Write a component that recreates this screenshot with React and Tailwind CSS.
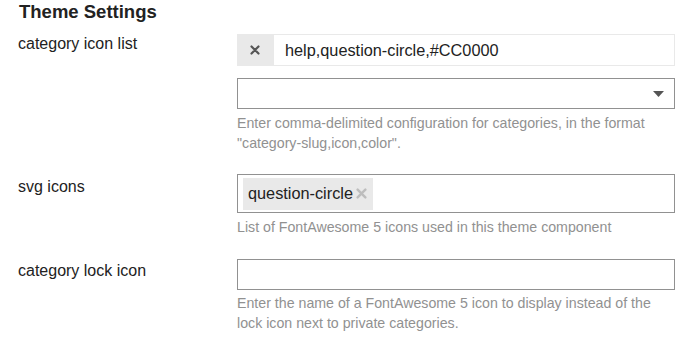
export default function App() {
  const font = { fontFamily: '"Liberation Sans", Arial, Helvetica, sans-serif' };
  return (
    <div className="w-[690px] h-[344px] bg-white text-[#222222] overflow-hidden" style={font}>
      <h2 className="pl-[19px] pt-[1px] text-[18.5px] leading-[22px] font-bold">Theme Settings</h2>

      <div className="flex mt-[11px]">
        <div className="w-[237px] pl-[18px] text-[16px] leading-[18px] pt-[1px]">category icon list</div>
        <div className="w-[438px]">
          <div className="flex h-[32px]">
            <div className="w-[36px] bg-[#e9e9e9] flex items-center justify-center">
              <svg width="10" height="10" viewBox="0 0 10 10">
                <path d="M1.5 1.5 L8.5 8.5 M8.5 1.5 L1.5 8.5" stroke="#555" strokeWidth="2.2" strokeLinecap="round" />
              </svg>
            </div>
            <div className="flex-1 border border-[#e9e9e9] flex items-center pl-[11px] text-[16.3px]">help,question-circle,#CC0000</div>
          </div>
          <div className="mt-[12px] h-[31px] border border-[#919191] flex items-center justify-end pr-[10px]">
            <svg width="11" height="6" viewBox="0 0 11 6">
              <path d="M0 0 L11 0 L5.5 6 Z" fill="#555" />
            </svg>
          </div>
          <div className="mt-[4px] text-[14.2px] leading-[20px] text-[#919191]">
            Enter comma-delimited configuration for categories, in the format
            <br />
            "category-slug,icon,color".
          </div>
        </div>
      </div>

      <div className="flex mt-[21px]">
        <div className="w-[237px] pl-[18px] text-[16px] leading-[18px] pt-[4px]">svg icons</div>
        <div className="w-[438px]">
          <div className="h-[39px] border border-[#919191] flex items-center pl-[5px]">
            <div className="h-[32px] bg-[#e9e9e9] flex items-center pl-[5px] pr-[6px] text-[16.3px]">
              question-circle
              <svg width="11" height="11" viewBox="0 0 10 10" className="ml-[3px]">
                <path d="M1.5 1.5 L8.5 8.5 M8.5 1.5 L1.5 8.5" stroke="#bdbdbd" strokeWidth="2.2" strokeLinecap="round" />
              </svg>
            </div>
          </div>
          <div className="mt-[4px] text-[14.2px] leading-[20px] text-[#919191]">
            List of FontAwesome 5 icons used in this theme component
          </div>
        </div>
      </div>

      <div className="flex mt-[22px]">
        <div className="w-[237px] pl-[18px] text-[16px] leading-[18px] pt-[3px]">category lock icon</div>
        <div className="w-[438px]">
          <div className="h-[31px] border border-[#919191]"></div>
          <div className="mt-[3px] text-[14.2px] leading-[20px] text-[#919191]">
            Enter the name of a FontAwesome 5 icon to display instead of the
            <br />
            lock icon next to private categories.
          </div>
        </div>
      </div>
    </div>
  );
}
